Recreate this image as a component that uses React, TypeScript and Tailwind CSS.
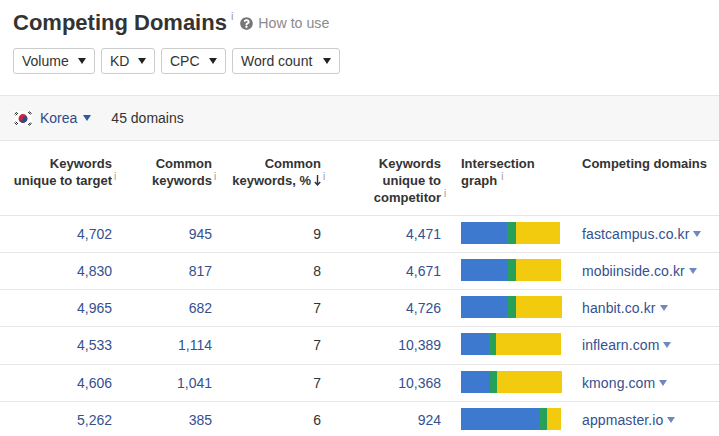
import { FaQuestionCircle } from "react-icons/fa";

const rows = [
  { unique: "4,702", common: "945", pct: "9", comp: "4,471", bar: [46, 9, 44], domain: "fastcampus.co.kr", height: "h-[37px]" },
  { unique: "4,830", common: "817", pct: "8", comp: "4,671", bar: [47, 8, 45], domain: "mobiinside.co.kr", height: "h-[37px]" },
  { unique: "4,965", common: "682", pct: "7", comp: "4,726", bar: [47, 8, 46], domain: "hanbit.co.kr", height: "h-[37px]" },
  { unique: "4,533", common: "1,114", pct: "7", comp: "10,389", bar: [28, 7, 65], domain: "inflearn.com", height: "h-[38px] pb-px" },
  { unique: "4,606", common: "1,041", pct: "7", comp: "10,368", bar: [29, 7, 65], domain: "kmong.com", height: "h-[37px]" },
  { unique: "5,262", common: "385", pct: "6", comp: "924", bar: [79, 7, 14], domain: "appmaster.io", height: "h-[37px]" },
];

const filters = [
  { label: "Volume", width: "w-[82px]" },
  { label: "KD", width: "w-[54px]" },
  { label: "CPC", width: "w-[65px]" },
  { label: "Word count", width: "w-[108px]" },
];

const gridCols = "grid grid-cols-[112px_100px_109px_120px_141px_1fr]";

function Caret({ className }: { className: string }) {
  return (
    <svg viewBox="0 0 8 6" className={className} fill="currentColor">
      <path d="M0 0h8L4 6z" />
    </svg>
  );
}

function Info({ className = "" }: { className?: string }) {
  return <span className={`text-[10px] font-normal leading-none text-[#999] align-top ${className}`}>i</span>;
}

function KoreaFlag() {
  return (
    <svg viewBox="0 0 18 15" className="w-[18px] h-[15px]">
      <rect width="18" height="15" fill="#fff" />
      <circle cx="9" cy="7.5" r="4.4" fill="#c8283c" />
      <path d="M4.6 7.5a2.2 2.2 0 0 0 4.4 0a2.2 2.2 0 0 1 4.4 0a4.4 4.4 0 0 1-8.8 0z" fill="#2d4a96" />
      <g stroke="#222" strokeWidth="1">
        <path d="M0.6 3.4l2.2-2.4M1.7 4.4l2.2-2.4" />
        <path d="M14.2 1l2.2 2.4M15.3 0.4l2.2 2.4" />
        <path d="M0.6 11.6l2.2 2.4M1.7 10.6l2.2 2.4" />
        <path d="M14.2 14l2.2-2.4M15.3 14.6l2.2-2.4" />
      </g>
    </svg>
  );
}

export default function App() {
  return (
    <div className="w-[719px] h-[436px] overflow-hidden bg-white text-[#333] font-['Liberation_Sans',Arial,sans-serif] text-[14px]">
      {/* Title */}
      <div className="h-[48px] pl-[13px] pt-[9px] flex items-start">
        <h1 className="text-[22px] leading-[28px] font-bold text-[#333]">Competing Domains</h1>
        <span className="text-[11px] leading-none text-[#999] ml-[4px] mt-[2px]">i</span>
        <div className="flex items-center ml-[7px] mt-[4px] text-[#8a8a8a]">
          <FaQuestionCircle className="w-[13px] h-[13px] text-[#777]" />
          <span className="ml-[5px] text-[14.2px] leading-[20px]">How to use</span>
        </div>
      </div>

      {/* Filters */}
      <div className="flex gap-[6px] pl-[13px] h-[47px]">
        {filters.map((f) => (
          <div key={f.label} className={`${f.width} h-[26px] pl-[8px] pr-[8px] flex items-center justify-between border border-[#ccc] rounded-[3px]`}>
            <span className="text-[14px]">{f.label}</span>
            <Caret className="w-[8px] h-[6px] text-[#222]" />
          </div>
        ))}
      </div>

      {/* Country band */}
      <div className="h-[46px] bg-[#f7f7f7] border-y border-[#e6e6e6] pl-[14px] flex items-center">
        <KoreaFlag />
        <span className="ml-[8px] text-[#2d4a8a]">Korea</span>
        <Caret className="ml-[6px] w-[8px] h-[6px] text-[#2d5aa8]" />
        <span className="ml-[20px]">45 domains</span>
      </div>

      {/* Header */}
      <div className={`${gridCols} h-[75px] border-b border-[#e6e6e6] pt-[14px] text-[13px] leading-[17px] font-bold`}>
        <div className="text-right whitespace-nowrap">
          Keywords
          <br />
          unique to target<Info className="absolute ml-[2px]" />
        </div>
        <div className="text-right whitespace-nowrap">
          Common
          <br />
          keywords<Info className="absolute ml-[2px]" />
        </div>
        <div className="text-right whitespace-nowrap">
          Common
          <br />
          <span className="inline-flex items-center">
            keywords, %
            <svg viewBox="0 0 7 11" className="w-[7px] h-[11px] ml-[3px]" fill="none" stroke="#333" strokeWidth="1.4">
              <path d="M3.5 0v9.5M0.8 7l2.7 3 2.7-3" />
            </svg>
          </span>
          <Info className="absolute ml-[2px]" />
        </div>
        <div className="text-right whitespace-nowrap">
          Keywords
          <br />
          unique to
          <br />
          competitor<Info className="absolute ml-[3px]" />
        </div>
        <div className="pl-[20px]">
          Intersection
          <br />
          graph<Info className="ml-[4px]" />
        </div>
        <div>Competing domains</div>
      </div>

      {/* Rows */}
      {rows.map((r) => (
        <div key={r.domain} className={`${gridCols} ${r.height} items-center border-b border-[#e6e6e6]`}>
          <div className="text-right text-[#34508f]">{r.unique}</div>
          <div className="text-right text-[#34508f]">{r.common}</div>
          <div className="text-right">{r.pct}</div>
          <div className="text-right text-[#34508f]">{r.comp}</div>
          <div className="pl-[20px] mb-[2px] flex h-[22px]">
            <div className="bg-[#3d7acf]" style={{ width: r.bar[0] }} />
            <div className="bg-[#27a05a]" style={{ width: r.bar[1] }} />
            <div className="bg-[#f2ca0e]" style={{ width: r.bar[2] }} />
          </div>
          <div className="flex items-center text-[#34508f] whitespace-nowrap tracking-[0.1px]">
            {r.domain}
            <Caret className="ml-[4px] w-[8px] h-[6px] text-[#7088bb]" />
          </div>
        </div>
      ))}
    </div>
  );
}
